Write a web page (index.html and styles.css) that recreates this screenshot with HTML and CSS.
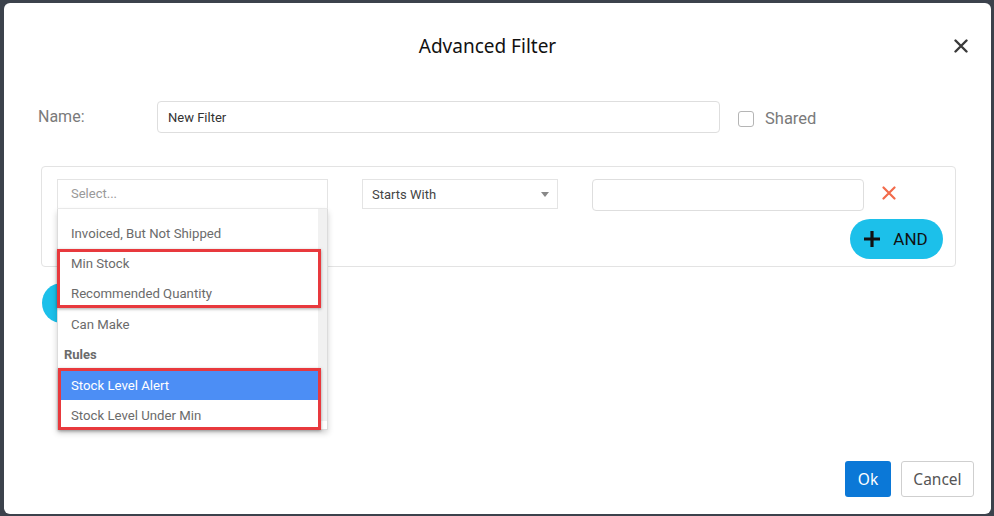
FILE: index.html
```html
<!DOCTYPE html>
<html>
<head>
<meta charset="utf-8">
<link rel="stylesheet" href="styles.css">
</head>
<body>
<div class="backdrop">
  <div class="modal">
    <div class="header">
      <div class="title">Advanced Filter</div>
      <svg class="close" width="14" height="14" viewBox="0 0 14 14"><path d="M1.5 1.5l11 11M12.5 1.5l-11 11" stroke="#3a3a3a" stroke-width="2.4" stroke-linecap="round"/></svg>
    </div>
    <div class="content">
      <div class="name-row">
        <label class="name-label">Name:</label>
        <div class="name-input">New Filter</div>
        <span class="checkbox"></span>
        <span class="shared">Shared</span>
      </div>
      <div class="filter-box">
        <div class="rule-row">
          <div class="field-select">
            <div class="select-top">Select...</div>
            <div class="dropdown">
              <div class="list">
                <div class="item">Invoiced, But Not Shipped</div>
                <div class="item">Min Stock</div>
                <div class="item">Recommended Quantity</div>
                <div class="item">Can Make</div>
                <div class="group">Rules</div>
                <div class="item active">Stock Level Alert</div>
                <div class="item">Stock Level Under Min</div>
              </div>
              <div class="scrollbar"></div>
              <div class="mark mark-1"></div>
              <div class="mark mark-2"></div>
            </div>
          </div>
          <div class="op-select">
            <span>Starts With</span>
            <svg class="caret" width="8" height="5" viewBox="0 0 8 5"><path d="M0 0h8L4 5z" fill="#888"/></svg>
          </div>
          <div class="value-input"></div>
          <svg class="remove" width="14" height="14" viewBox="0 0 14 14"><path d="M1.5 1.5l11 11M12.5 1.5l-11 11" stroke="#f26b4b" stroke-width="2.2" stroke-linecap="round"/></svg>
        </div>
        <div class="and-row">
          <button class="pill">
            <svg width="18" height="18" viewBox="0 0 18 18"><path d="M9 1v16M1 9h16" stroke="#111" stroke-width="3.2"/></svg>
            <span>AND</span>
          </button>
        </div>
      </div>
      <div class="or-row">
        <button class="pill or">
          <svg width="18" height="18" viewBox="0 0 18 18"><path d="M9 1v16M1 9h16" stroke="#111" stroke-width="3.2"/></svg>
        </button>
      </div>
    </div>
    <div class="footer">
      <button class="btn ok">Ok</button>
      <button class="btn cancel">Cancel</button>
    </div>
  </div>
</div>
</body>
</html>
```

FILE: styles.css
```css
* { box-sizing: border-box; }
html, body { margin: 0; padding: 0; }
body {
  width: 994px;
  height: 516px;
  overflow: hidden;
  background: #3c424c;
  font-family: Roboto, "Liberation Sans", sans-serif;
}
.backdrop {
  padding: 3px 3px 2px 4px;
  height: 516px;
}
.modal {
  width: 987px;
  height: 511px;
  background: #fff;
  border-radius: 6px;
  display: flex;
  flex-direction: column;
}
.header {
  height: 86px;
  display: flex;
  align-items: center;
  justify-content: center;
  position: relative;
  padding-right: 20px;
}
.title {
  font-family: "Noto Sans", "Open Sans", sans-serif;
  font-size: 19px;
  color: #111;
}
.close {
  position: absolute;
  right: 23px;
  top: 36px;
}
.content {
  flex: 1;
  padding: 12px 0 0 34px;
}
.name-row {
  display: flex;
  align-items: center;
  height: 32px;
}
.name-label {
  width: 119px;
  font-size: 16px;
  color: #7a7a7a;
  margin-top: -2px;
}
.name-input {
  width: 563px;
  height: 32px;
  border: 1px solid #dedede;
  border-radius: 4px;
  font-size: 13px;
  color: #333;
  padding: 0 10px;
  display: flex;
  align-items: center;
}
.checkbox {
  width: 16px;
  height: 16px;
  border: 1px solid #b5b5b5;
  border-radius: 3px;
  margin-left: 18px;
  margin-top: 4px;
}
.shared {
  margin-left: 11px;
  font-size: 16.5px;
  color: #7a7a7a;
  margin-top: 2px;
}
.filter-box {
  margin-top: 33px;
  margin-left: 3px;
  width: 915px;
  height: 101px;
  border: 1px solid #e3e3e3;
  border-radius: 4px;
  padding: 12px 12px 0 15px;
}
.rule-row {
  display: flex;
  align-items: flex-start;
}
.field-select {
  position: relative;
  width: 271px;
  height: 30px;
}
.select-top {
  height: 30px;
  border: 1px solid #e4e4e4;
  border-bottom-color: #eee;
  font-size: 13px;
  color: #999;
  padding-left: 13px;
  padding-bottom: 2px;
  display: flex;
  align-items: center;
  background: #fff;
}
.dropdown {
  position: absolute;
  left: 0;
  top: 30px;
  width: 271px;
  height: 221px;
  background: #fff;
  border: 1px solid #dcdcdc;
  border-top: none;
  box-shadow: 0 3px 6px rgba(0,0,0,0.18);
  display: flex;
  z-index: 5;
}
.list {
  width: 261px;
  padding-top: 9px;
}
.item {
  height: 30.4px;
  display: flex;
  align-items: center;
  padding-left: 13px;
  font-size: 13.2px;
  color: #6b6b6b;
}
.item.active {
  background: #4c8ef5;
  color: #fff;
}
.group {
  height: 30.4px;
  display: flex;
  align-items: center;
  padding-left: 6px;
  font-size: 13px;
  font-weight: bold;
  color: #6b6b6b;
}
.scrollbar {
  width: 9px;
  height: 212px;
  background: #f1f1f1;
}
.mark {
  position: absolute;
  border: 3px solid #e8393d;
  box-shadow: 0 1px 3px rgba(0,0,0,0.35);
}
.mark-1 { left: -1px; top: 40px; width: 264px; height: 59px; }
.mark-2 { left: 0px; top: 159px; width: 263px; height: 62px; }
.op-select {
  margin-left: 34px;
  width: 196px;
  height: 30px;
  border: 1px solid #e4e4e4;
  display: flex;
  align-items: center;
  justify-content: space-between;
  padding: 0 8px 0 9px;
  font-size: 13px;
  color: #444;
}
.value-input {
  margin-left: 34px;
  width: 272px;
  height: 32px;
  border: 1px solid #dedede;
  border-radius: 4px;
}
.remove {
  margin-left: 18px;
  margin-top: 7px;
}
.and-row {
  display: flex;
  justify-content: flex-end;
  margin-top: 8px;
}
.pill {
  height: 40px;
  width: 93px;
  border: none;
  border-radius: 20px;
  background: #1cc0ea;
  display: flex;
  align-items: center;
  justify-content: center;
  gap: 12px;
  font-family: Roboto, sans-serif;
  font-size: 17px;
  color: #111;
  padding: 0 6px 0 4px;
}
.or-row {
  margin-top: 16px;
  margin-left: 4px;
}
.pill.or { width: 80px; }
.footer {
  display: flex;
  justify-content: flex-end;
  gap: 10px;
  padding: 0 17px 17px 0;
}
.btn {
  height: 36px;
  font-family: "Noto Sans", "Open Sans", sans-serif;
  font-size: 15.5px;
  border-radius: 3px;
}
.ok {
  width: 46px;
  background: #0b78d7;
  color: #fff;
  border: none;
}
.cancel {
  width: 73px;
  background: #fff;
  color: #555;
  border: 1px solid #cfcfcf;
}
```
